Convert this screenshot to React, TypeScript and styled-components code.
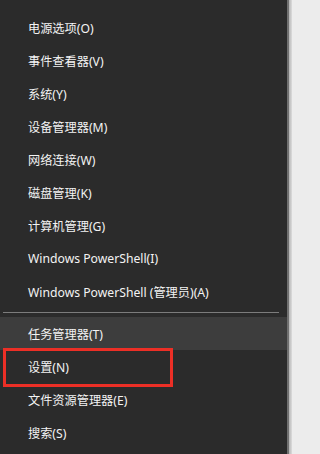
import React from "react";
import styled, { createGlobalStyle } from "styled-components";

const Global = createGlobalStyle`
  html, body {
    margin: 0;
    padding: 0;
    background: #ececec;
    overflow: hidden;
  }
  #root {
    height: 454px;
  }
`;

const Frame = styled.div`
  width: 100%;
  height: 454px;
  display: flex;
  overflow: hidden;
  background: #ececec;
`;

const Menu = styled.div`
  width: 289px;
  height: 454px;
  flex: none;
  box-sizing: border-box;
  background: #2b2b2b;
  border-right: 2px solid #707070;
  overflow: hidden;
  display: flex;
  flex-direction: column;
`;

const EdgeShade = styled.div`
  width: 3px;
  height: 454px;
  flex: none;
  background: linear-gradient(90deg, #b4b4b4, #dcdcdc);
`;

const List = styled.div`
  display: flex;
  flex-direction: column;
  padding-top: 11px;
`;

const Item = styled.div<{ $active?: boolean }>`
  position: relative;
  height: 33px;
  flex: none;
  display: flex;
  align-items: center;
  padding-left: 28px;
  background: ${(p) => (p.$active ? "#3d3d3d" : "transparent")};
  color: #f3f3f3;
  font-family: "Segoe UI", "Noto Sans", "Noto Sans CJK SC", sans-serif;
  font-size: 12.2px;
  white-space: nowrap;
`;

const Separator = styled.div`
  height: 9px;
  flex: none;
  display: flex;
  align-items: center;
  padding: 0 8px 0 3px;
  &::after {
    content: "";
    flex: 1;
    height: 1px;
    background: #7c7c7c;
  }
`;

const Highlight = styled.div`
  position: absolute;
  left: 3px;
  top: -2px;
  width: 164px;
  height: 33px;
  border: 3px solid #ec2f26;
  pointer-events: none;
`;

const groupA = [
  "电源选项(O)",
  "事件查看器(V)",
  "系统(Y)",
  "设备管理器(M)",
  "网络连接(W)",
  "磁盘管理(K)",
  "计算机管理(G)",
  "Windows PowerShell(I)",
  "Windows PowerShell (管理员)(A)",
];

const groupB = ["任务管理器(T)", "设置(N)", "文件资源管理器(E)", "搜索(S)"];

export default function App() {
  return (
    <>
      <Global />
      <Frame>
        <Menu>
          <List>
            {groupA.map((t) => (
              <Item key={t}>{t}</Item>
            ))}
            <Separator />
            {groupB.map((t, i) => (
              <Item key={t} $active={i === 0}>
                {t}
                {i === 1 && <Highlight />}
              </Item>
            ))}
          </List>
        </Menu>
        <EdgeShade />
      </Frame>
    </>
  );
}
